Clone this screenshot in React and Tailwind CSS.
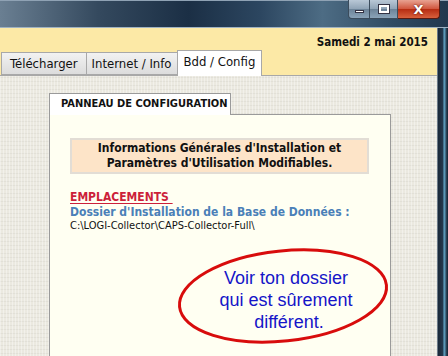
import React from 'react';

// window control buttons in the title bar
function WindowControls() {
    return (
        <div className="absolute right-[8px] top-0 flex h-[19px]">
            <div className="flex w-[22px] items-center justify-center rounded-bl-[4px] border border-t-0 border-[#3b4c5c] bg-[linear-gradient(to_bottom,#b9c8d6,#8fa3b6_50%,#6c8398_51%,#8aa3b8)]">
                <div className="mt-[5px] h-[3px] w-[9px] border border-[#334] bg-white" />
            </div>
            <div className="flex w-[28px] items-center justify-center border-b border-r border-[#3b4c5c] bg-[linear-gradient(to_bottom,#b9c8d6,#8fa3b6_50%,#6c8398_51%,#8aa3b8)]">
                <div className="h-[8px] w-[10px] border-2 border-white outline outline-1 outline-[#334]" />
            </div>
            <div className="flex w-[42px] items-center justify-center rounded-br-[4px] border-b border-r border-[#5a1a10] bg-[linear-gradient(to_bottom,#e8a291,#d0543c_50%,#b62c12_51%,#d8603c)]">
                <span className="text-[13px] font-bold leading-none text-white [font-family:'DejaVu_Sans',sans-serif] [text-shadow:0_0_2px_#400]">X</span>
            </div>
        </div>
    );
}

function Tab({ label, active, pad = 'px-[7px]' }) {
    if (active) {
        return (
            <div className={`relative z-10 -ml-px mb-[-1px] flex h-[26px] items-start border border-b-0 border-[#a8a8a8] bg-white ${pad} pt-[3px] text-[13px] leading-[16px] text-[#111]`}>
                {label}
            </div>
        );
    }
    return (
        <div className={`-ml-px flex h-[23px] items-center border border-[#a8a8a8] bg-[linear-gradient(to_bottom,#f2f2f2,#dcdcdc)] ${pad} text-[13px] text-[#111]`}>
            {label}
        </div>
    );
}

export default function App() {
    return (
        <div className="flex h-[356px] w-[448px] flex-col overflow-hidden bg-[#1c2c3c] [font-family:'DejaVu_Sans_Condensed','DejaVu_Sans',sans-serif]">
            {/* title bar */}
            <div className="relative h-[28px] shrink-0 bg-[linear-gradient(to_right,#6a7f92,#34495e_22%,#1b2f45_42%,#2c4660_58%,#4d6c84_72%,#2f4a62_88%,#22384e)]">
                <div className="absolute inset-x-0 top-0 h-[1px] bg-[#8fa2b4]" />
                <div className="absolute inset-x-0 bottom-0 h-[1px] bg-[#9fb2c2]" />
                <WindowControls />
            </div>

            <div className="flex flex-1">
                {/* client area */}
                <div className="flex w-[438px] flex-col border-r border-[#6b7a88]">
                    <div className="flex h-[47px] shrink-0 flex-col justify-between bg-[#fce9a6]">
                        <div className="flex justify-end pr-[9px] pt-[7px] text-[11.5px] font-bold leading-[14px] text-[#111]">
                            Samedi 2 mai 2015
                        </div>
                        <div className="flex items-end pl-[2px]">
                            <Tab label="Télécharger" pad="px-[8px]" />
                            <Tab label="Internet / Info" pad="px-[5px]" />
                            <Tab label="Bdd / Config" pad="px-[6px]" active />
                        </div>
                    </div>

                    {/* textured body */}
                    <div className="flex-1 border-t border-[#a8a8a8] bg-[#ebe9e0] bg-[repeating-linear-gradient(90deg,rgba(255,255,255,0.35)_0px,rgba(255,255,255,0.35)_1px,transparent_1px,transparent_3px),repeating-linear-gradient(0deg,rgba(0,0,0,0.04)_0px,rgba(0,0,0,0.04)_1px,transparent_1px,transparent_4px)] pl-[49px] pt-[14px]">
                        <div className="w-[342px]">
                            <div className="relative z-10 mb-[-1px] inline-flex h-[22px] w-[182px] items-center border border-b-0 border-[#9a9a9a] bg-white pl-[11px] text-[11px] font-bold text-[#111]">
                                PANNEAU DE CONFIGURATION
                            </div>
                            <div className="relative h-[260px] border border-[#9a9a9a] bg-[#fffff2] pl-[20px] pt-[23px]">
                                <div className="flex h-[36px] w-[299px] flex-col items-center justify-center border-2 border-[#e2ddd5] bg-[#fde4c8] text-[12px] font-bold leading-[15px] text-[#111]">
                                    <div>Informations Générales d'Installation et</div>
                                    <div>Paramètres d'Utilisation Modifiables.</div>
                                </div>

                                <div className="mt-[16px] text-[12px] font-bold leading-[14px] text-[#cc1f3a] underline decoration-1 underline-offset-[2px]">
                                    EMPLACEMENTS&nbsp;
                                </div>
                                <div className="mt-[1px] text-[12px] font-bold leading-[15px] text-[#4a80b8]">
                                    Dossier d'Installation de la Base de Données :
                                </div>
                                <div className="text-[11px] leading-[12px] text-[#111]">
                                    C:\LOGI-Collector\CAPS-Collector-Full\
                                </div>

                                {/* hand-drawn annotation */}
                                <div className="absolute left-[120px] top-[127px] h-[110px] w-[230px]">
                                    <svg width="230" height="110" viewBox="0 0 230 110" className="absolute inset-0">
                                        <ellipse cx="113" cy="54" rx="104" ry="45" fill="none" stroke="#d80c0c" strokeWidth="3" transform="rotate(-6 113 54)" />
                                    </svg>
                                    <div className="relative flex flex-col items-center pl-[2px] pt-[25px] text-[18px] leading-[22px] text-[#1515c8] [font-family:'Liberation_Sans',Arial,sans-serif]">
                                        <div>Voir ton dossier</div>
                                        <div>qui est sûrement</div>
                                        <div className="pl-[6px]">différent.</div>
                                    </div>
                                </div>
                            </div>
                        </div>
                    </div>
                </div>

                {/* right window frame */}
                <div className="w-[9px] bg-[linear-gradient(to_right,#1a2838,#23384c_50%,#5fa0c0_70%,#1c2c3c)]" />
            </div>
        </div>
    );
}
